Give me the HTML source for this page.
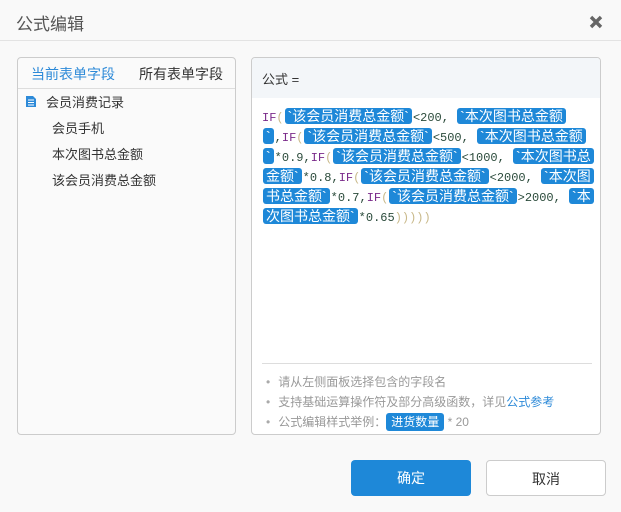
<!DOCTYPE html>
<html><head><meta charset="utf-8"><style>
*{margin:0;padding:0;box-sizing:border-box}
body{width:621px;height:512px;background:#f9f9f9;font-family:"Liberation Sans","Noto Sans CJK SC",sans-serif;position:relative;overflow:hidden;color:#333}
.abs{position:absolute}
.title{left:16px;top:10px;font-size:17px;color:#555}
.hl{left:0;top:40px;width:621px;height:1px;background:#e3e3e3}
.lp{left:17px;top:57px;width:219px;height:378px;border:1px solid #ccc;border-radius:4px;background:#fafafa}
.rp{left:251px;top:57px;width:350px;height:378px;border:1px solid #ccc;border-radius:4px;background:#fff;overflow:hidden}
.tab{font-size:14px;top:6px}
.f{font-family:"Liberation Mono","Noto Sans CJK SC",monospace;font-size:12px;position:absolute;left:10px;white-space:nowrap;line-height:20px}
.k{color:#7a2a8a}.p{color:#c9b98a}.n{color:#2b4b3b}
.c{background:#1e88d8;color:#fff;border-radius:3px;padding:0 3px;margin:0 1px;font-size:14px;font-family:"Liberation Sans","Noto Sans CJK SC",sans-serif}
.note{font-size:12px;color:#999;position:absolute;left:14px}
.note:before{content:"•";margin-right:8px;color:#aaa}
.btn{top:460px;width:120px;height:36px;border-radius:4px;font-size:14px;text-align:center;line-height:36px}
</style></head><body>
<div class="abs title">公式编辑</div>
<svg class="abs" style="left:588px;top:14px" width="16" height="16" viewBox="0 0 16 16"><path d="M3 3L13 13M13 3L3 13" stroke="#666" stroke-width="3.4"/></svg>
<div class="abs hl"></div>
<div class="abs lp">
 <div class="abs tab" style="left:13px;color:#2d8ad8">当前表单字段</div>
 <div class="abs tab" style="left:121px;color:#333">所有表单字段</div>
 <div class="abs" style="left:0;top:30px;width:217px;height:1px;background:#ddd"></div>
 <svg class="abs" style="left:7px;top:37px" width="12" height="13" viewBox="0 0 12 13"><path d="M1 1h7l3 3v8H1z" fill="#2d8ad8"/><path d="M3 5h6M3 7.5h6M3 10h6" stroke="#fff" stroke-width="1"/></svg>
 <div class="abs" style="left:28px;top:34px;font-size:13px">会员消费记录</div>
 <div class="abs" style="left:34px;top:60px;font-size:13px">会员手机</div>
 <div class="abs" style="left:34px;top:86px;font-size:13px">本次图书总金额</div>
 <div class="abs" style="left:34px;top:112px;font-size:13px">该会员消费总金额</div>
</div>
<div class="abs rp">
 <div class="abs" style="left:0;top:0;width:350px;height:40px;background:#f3f6f9"></div>
 <div class="abs" style="left:10px;top:11px;font-size:13px">公式 =</div>
 <div class="f" style="top:48px"><span class="k">IF</span><span class="p">(</span><span class="c">`该会员消费总金额`</span><span class="n">&lt;200,</span> <span class="c">`本次图书总金额</span></div>
 <div class="f" style="top:68px"><span class="c">`</span><span class="n">,</span><span class="k">IF</span><span class="p">(</span><span class="c">`该会员消费总金额`</span><span class="n">&lt;500,</span> <span class="c">`本次图书总金额</span></div>
 <div class="f" style="top:88px"><span class="c">`</span><span class="n">*0.9,</span><span class="k">IF</span><span class="p">(</span><span class="c">`该会员消费总金额`</span><span class="n">&lt;1000,</span> <span class="c">`本次图书总</span></div>
 <div class="f" style="top:108px"><span class="c">金额`</span><span class="n">*0.8,</span><span class="k">IF</span><span class="p">(</span><span class="c">`该会员消费总金额`</span><span class="n">&lt;2000,</span> <span class="c">`本次图</span></div>
 <div class="f" style="top:128px"><span class="c">书总金额`</span><span class="n">*0.7,</span><span class="k">IF</span><span class="p">(</span><span class="c">`该会员消费总金额`</span><span class="n">&gt;2000,</span> <span class="c">`本</span></div>
 <div class="f" style="top:148px"><span class="c">次图书总金额`</span><span class="n">*0.65</span><span class="p">)))))</span></div>
 <div class="abs" style="left:10px;top:305px;width:330px;height:1px;background:#ddd"></div>
 <div class="note" style="top:315px">请从左侧面板选择包含的字段名</div>
 <div class="note" style="top:335px">支持基础运算操作符及部分高级函数，详见<span style="color:#2d8ad8">公式参考</span></div>
 <div class="note" style="top:355px">公式编辑样式举例：<span style="background:#1e88d8;color:#fff;border-radius:3px;padding:2px 5px">进货数量</span> * 20</div>
</div>
<div class="abs btn" style="left:351px;background:#1e88d8;color:#fff">确定</div>
<div class="abs btn" style="left:486px;background:#fff;border:1px solid #ccc;color:#333">取消</div>
</body></html>
